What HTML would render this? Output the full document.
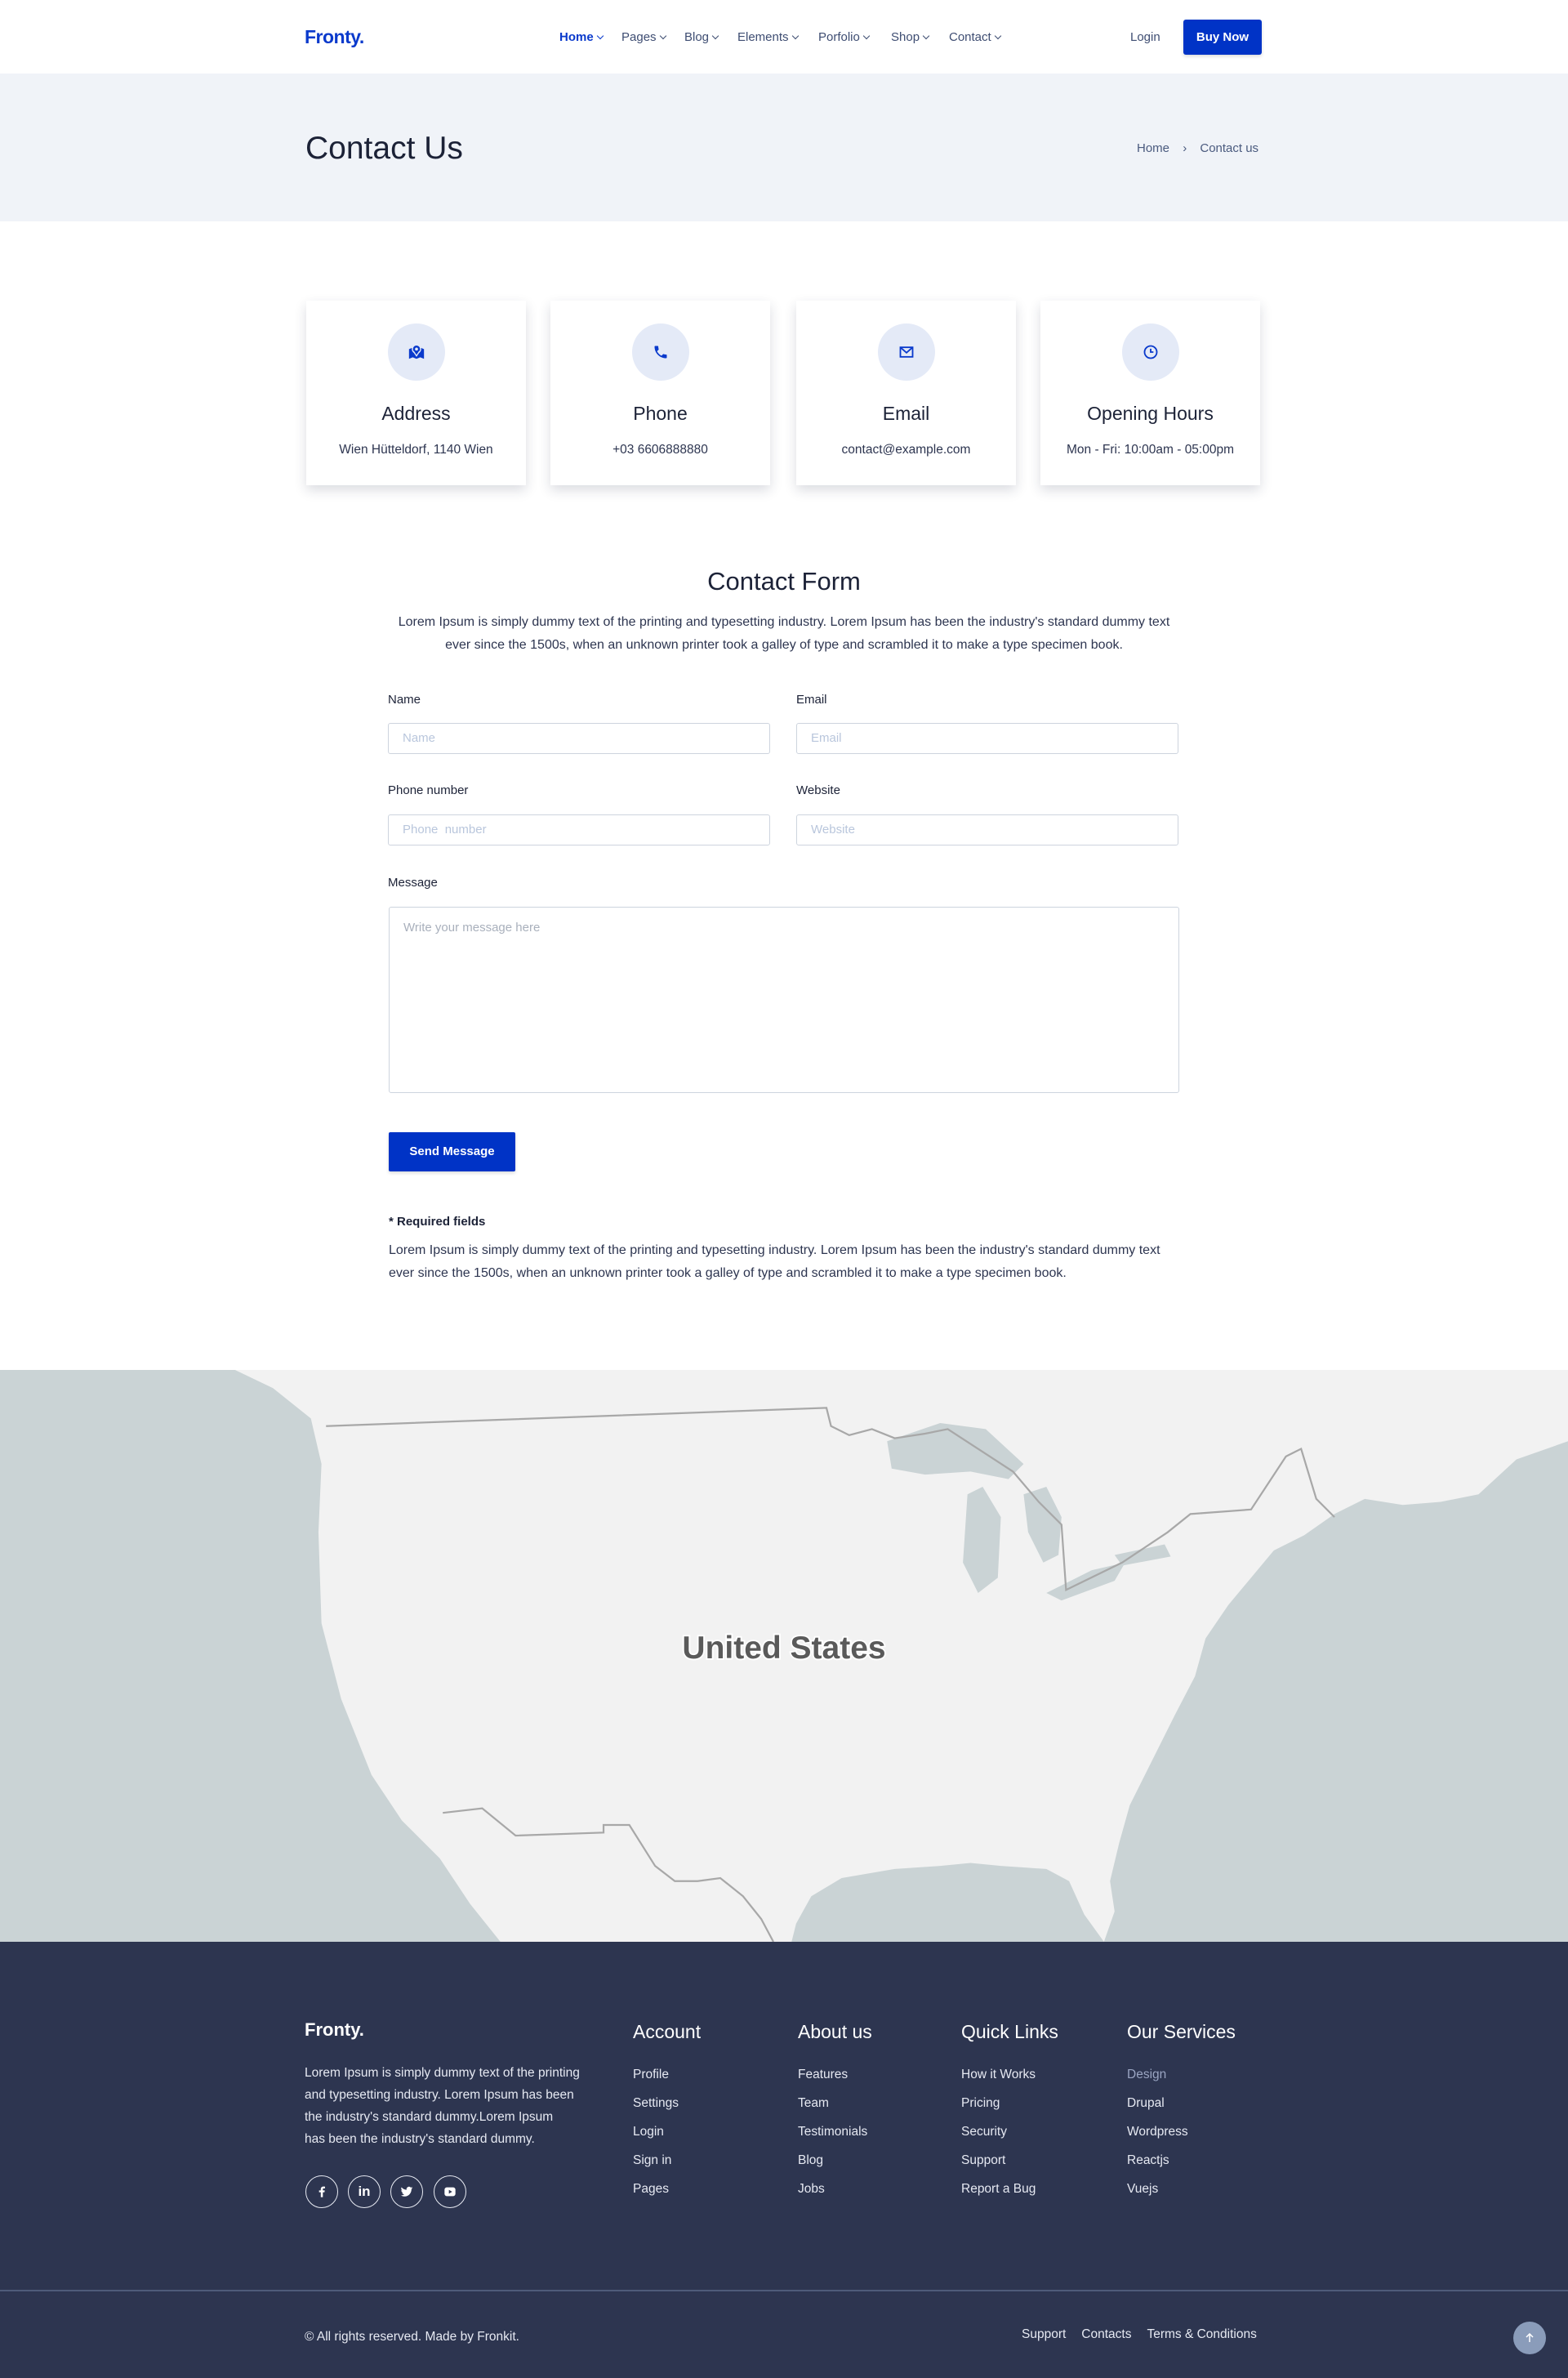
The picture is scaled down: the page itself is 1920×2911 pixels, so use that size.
<!DOCTYPE html>
<html><head><meta charset="utf-8">
<style>
*{margin:0;padding:0;box-sizing:border-box}
body{width:1920px;height:2911px;position:relative;font-family:"Liberation Sans",Arial,sans-serif;background:#fff;color:#1c2237;overflow:hidden}
.a{position:absolute;white-space:nowrap}
.nav a{position:absolute;top:37px;font-size:15px;color:#3e4d72;text-decoration:none}
.nav a .c{display:inline-block;width:6px;height:6px;border-right:1.3px solid currentColor;border-bottom:1.3px solid currentColor;transform:rotate(45deg);margin-left:5px;position:relative;top:-3px}
.card{position:absolute;top:368px;width:269px;height:226px;background:#fff;box-shadow:0 6px 14px rgba(30,40,70,.16);text-align:center}
.card .ic{width:70px;height:70px;border-radius:50%;background:#e4eaf7;margin:28px auto 0;display:flex;align-items:center;justify-content:center}
.card h3{font-size:23px;margin-top:27px;color:#1c2237;font-weight:normal}
.card p{font-size:15.5px;color:#2d3550;margin-top:22px}
.lbl{position:absolute;font-size:15px;color:#1c2237}
.inp{position:absolute;height:38px;border:1px solid #cdd4de;border-radius:3px;font-size:15px;color:#b9c6dc;padding:9px 17px}
.para{font-size:16px;line-height:28px;color:#2d3550}
.fh{position:absolute;top:2474px;font-size:23px;color:#fff}
.fl{position:absolute;font-size:15.5px;color:#e6e9f2;line-height:35px}
.soc{position:absolute;top:2663px;width:40px;height:40px;border:1.3px solid #e8ebf3;border-radius:50%;display:flex;align-items:center;justify-content:center}
</style></head><body>

<div class="a" style="left:373px;top:32px;font-size:23px;font-weight:bold;color:#0a3acc;letter-spacing:-0.5px">Fronty.</div>
<div class="nav">
<a style="left:685px;color:#0a3acc;font-weight:bold">Home<span class="c"></span></a>
<a style="left:761px">Pages<span class="c"></span></a>
<a style="left:838px">Blog<span class="c"></span></a>
<a style="left:903px">Elements<span class="c"></span></a>
<a style="left:1002px">Porfolio<span class="c"></span></a>
<a style="left:1091px">Shop<span class="c"></span></a>
<a style="left:1162px">Contact<span class="c"></span></a>
</div>
<div class="a" style="left:1384px;top:37px;font-size:15px;color:#3e4d72">Login</div>
<div class="a" style="left:1449px;top:24px;width:96px;height:43px;background:#0033c6;border-radius:3px;color:#fff;font-size:15px;font-weight:bold;text-align:center;line-height:43px;box-shadow:0 2px 4px rgba(0,0,0,.15)">Buy Now</div>

<div class="a" style="left:0;top:90px;width:1920px;height:181px;background:#f0f3f8"></div>
<div class="a" style="left:374px;top:160px;font-size:39px;color:#1c2237">Contact Us</div>
<div class="a" style="left:1392px;top:173px;font-size:15px;color:#4a5a7e">Home <span style="margin:0 12px">›</span> Contact us</div>

<div class="card" style="left:375px"><div class="ic"><svg width="22" height="22" viewBox="0 0 24 24"><path d="M2 8l5-2 5 2 5-2 5 2v13l-5-2-5 2-5-2-5 2z" fill="#0a3acc"/><circle cx="12" cy="8" r="5.5" fill="#0a3acc" stroke="#e4eaf7" stroke-width="1.5"/><path d="M8 11l4 6 4-6" fill="#0a3acc" stroke="#e4eaf7" stroke-width="1.5"/><circle cx="12" cy="8" r="2" fill="#e4eaf7"/></svg></div><h3>Address</h3><p>Wien Hütteldorf, 1140 Wien</p></div>
<div class="card" style="left:674px"><div class="ic"><svg width="20" height="20" viewBox="0 0 24 24"><path d="M6.6 10.8c1.4 2.8 3.8 5.1 6.6 6.6l2.2-2.2c.3-.3.7-.4 1-.2 1.1.4 2.3.6 3.6.6.6 0 1 .4 1 1V20c0 .6-.4 1-1 1C10.6 21 3 13.4 3 4c0-.6.4-1 1-1h3.5c.6 0 1 .4 1 1 0 1.300.2 2.500.6 3.600.1.3 0 .7-.2 1z" fill="#0a3acc"/></svg></div><h3>Phone</h3><p>+03 6606888880</p></div>
<div class="card" style="left:975px"><div class="ic"><svg width="20" height="20" viewBox="0 0 24 24" fill="none" stroke="#0a3acc" stroke-width="2.2"><rect x="3" y="5" width="18" height="14"/><path d="M3 5l9 8 9-8"/></svg></div><h3>Email</h3><p>contact@example.com</p></div>
<div class="card" style="left:1274px"><div class="ic"><svg width="20" height="20" viewBox="0 0 24 24" fill="none" stroke="#0a3acc" stroke-width="2.2"><circle cx="12" cy="12" r="9"/><path d="M12 7v5h4"/></svg></div><h3>Opening Hours</h3><p>Mon - Fri: 10:00am - 05:00pm</p></div>

<div class="a" style="left:0;width:1920px;top:694px;text-align:center;font-size:31px;color:#1c2237">Contact Form</div>
<div class="a para" style="left:0;width:1920px;top:748px;text-align:center">Lorem Ipsum is simply dummy text of the printing and typesetting industry. Lorem Ipsum has been the industry's standard dummy text<br>ever since the 1500s, when an unknown printer took a galley of type and scrambled it to make a type specimen book.</div>

<div class="lbl" style="left:475px;top:848px">Name</div>
<div class="lbl" style="left:975px;top:848px">Email</div>
<div class="inp" style="left:475px;top:885px;width:468px">Name</div>
<div class="inp" style="left:975px;top:885px;width:468px">Email</div>
<div class="lbl" style="left:475px;top:959px">Phone number</div>
<div class="lbl" style="left:975px;top:959px">Website</div>
<div class="inp" style="left:475px;top:997px;width:468px">Phone&nbsp; number</div>
<div class="inp" style="left:975px;top:997px;width:468px">Website</div>
<div class="lbl" style="left:475px;top:1072px">Message</div>
<div class="inp" style="left:476px;top:1110px;width:968px;height:228px;color:#a9b0bc;padding-top:16px">Write your message here</div>
<div class="a" style="left:476px;top:1386px;width:155px;height:48px;background:#0033c6;border-radius:2px;color:#fff;font-size:15px;font-weight:bold;text-align:center;line-height:48px;box-shadow:0 2px 4px rgba(0,0,0,.15)">Send Message</div>
<div class="a" style="left:476px;top:1487px;font-size:15px;font-weight:bold;color:#1c2237">* Required fields</div>
<div class="a para" style="left:476px;top:1517px">Lorem Ipsum is simply dummy text of the printing and typesetting industry. Lorem Ipsum has been the industry's standard dummy text<br>ever since the 1500s, when an unknown printer took a galley of type and scrambled it to make a type specimen book.</div>

<svg class="a" style="left:0;top:1677px" width="1920" height="700" viewBox="0 903 1034 377" preserveAspectRatio="none">
<rect x="0" y="903" width="1034" height="377" fill="#cad3d5"/>
<path d="M155 903 L1034 903 L1034 950 L1000 962 L975 985 L950 990 L925 992 L900 988 L880 998 L860 1012 L840 1022 L825 1040 L810 1058 L795 1080 L788 1105 L775 1130 L765 1150 L755 1170 L745 1190 L738 1215 L732 1240 L735 1260 L728 1280 L715 1262 L705 1240 L690 1232 L660 1230 L640 1228 L620 1230 L590 1232 L555 1238 L535 1250 L525 1268 L522 1280 L330 1280 L310 1255 L290 1225 L265 1200 L245 1170 L225 1120 L212 1070 L210 1010 L212 965 L205 935 L180 915 Z" fill="#f2f2f2"/>
<path d="M585 950 L620 938 L650 942 L675 965 L665 975 L640 970 L610 972 L588 968 Z" fill="#cad3d5"/>
<path d="M638 985 L648 980 L660 1000 L658 1040 L645 1050 L635 1030 Z" fill="#cad3d5"/>
<path d="M675 985 L690 980 L700 1000 L698 1025 L688 1030 L678 1010 Z" fill="#cad3d5"/>
<path d="M690 1050 L720 1035 L742 1030 L735 1042 L700 1055 Z" fill="#cad3d5"/>
<path d="M735 1025 L768 1018 L772 1026 L740 1032 Z" fill="#cad3d5"/>
<path d="M215 940 L545 928 L548 940 L560 946 L575 942 L590 948 L610 945 L625 942 L668 970 L685 990 L700 1005 L703 1048 L740 1030 L770 1010 L785 998 L825 995 L848 960 L858 955 L868 988 L880 1000" fill="none" stroke="#a8a8a8" stroke-width="1.2"/>
<path d="M292 1195 L318 1192 L340 1210 L398 1208 L398 1203 L415 1203 L432 1230 L445 1240 L460 1240 L475 1238 L490 1250 L502 1265 L510 1280" fill="none" stroke="#a8a8a8" stroke-width="1.2"/>
<text x="517" y="1093" text-anchor="middle" font-family="Liberation Sans, sans-serif" font-size="21" font-weight="bold" fill="#5a5a5a" stroke="#fff" stroke-width="2" paint-order="stroke">United States</text>
</svg>

<div class="a" style="left:0;top:2377px;width:1920px;height:534px;background:#2d3550"></div>
<div class="a" style="left:373px;top:2472px;font-size:22px;font-weight:bold;color:#fff">Fronty.</div>
<div class="a" style="left:373px;top:2524px;font-size:15.5px;line-height:27px;color:#e6e9f2">Lorem Ipsum is simply dummy text of the printing<br>and typesetting industry. Lorem Ipsum has been<br>the industry's standard dummy.Lorem Ipsum<br>has been the industry's standard dummy.</div>
<div class="soc" style="left:374px"><svg width="16" height="18" viewBox="0 0 24 24"><path d="M14 22v-9h3l.5-3.5H14V7.5c0-1 .3-1.7 1.8-1.7H18V2.6C17.6 2.5 16.4 2.4 15 2.4c-3 0-4.8 1.8-4.8 5V9.5H7V13h3.2v9z" fill="#fff"/></svg></div>
<div class="soc" style="left:426px"><span style="color:#fff;font-weight:bold;font-size:17px">in</span></div>
<div class="soc" style="left:478px"><svg width="18" height="16" viewBox="0 0 24 24"><path d="M23 5c-.8.4-1.7.6-2.6.7.9-.6 1.6-1.4 2-2.5-.9.5-1.9.9-2.9 1.1A4.5 4.5 0 0011.8 8.4 12.8 12.8 0 012.5 3.7a4.5 4.5 0 001.4 6c-.7 0-1.4-.2-2-.6 0 2.2 1.6 4 3.6 4.4-.7.2-1.4.2-2 .1.6 1.8 2.2 3.1 4.2 3.1A9 9 0 011 18.6 12.8 12.8 0 007.9 20.6c8.3 0 12.8-6.9 12.8-12.8v-.6c.9-.6 1.7-1.4 2.3-2.2z" fill="#fff"/></svg></div>
<div class="soc" style="left:531px"><svg width="18" height="16" viewBox="0 0 24 24"><rect x="2" y="4" width="20" height="16" rx="4" fill="#fff"/><path d="M10 8.5v7l6-3.5z" fill="#2d3550"/></svg></div>

<div class="fh" style="left:775px">Account</div>
<div class="fh" style="left:977px">About us</div>
<div class="fh" style="left:1177px">Quick Links</div>
<div class="fh" style="left:1380px">Our Services</div>
<div class="fl" style="left:775px;top:2522px">Profile<br>Settings<br>Login<br>Sign in<br>Pages</div>
<div class="fl" style="left:977px;top:2522px">Features<br>Team<br>Testimonials<br>Blog<br>Jobs</div>
<div class="fl" style="left:1177px;top:2522px">How it Works<br>Pricing<br>Security<br>Support<br>Report a Bug</div>
<div class="fl" style="left:1380px;top:2522px"><span style="color:#9aa5c2">Design</span><br>Drupal<br>Wordpress<br>Reactjs<br>Vuejs</div>

<div class="a" style="left:0;top:2803px;width:1920px;height:2px;background:#4f5b7a"></div>
<div class="a" style="left:373px;top:2852px;font-size:15.5px;color:#e6e9f2">© All rights reserved. Made by Fronkit.</div>
<div class="a" style="left:1251px;top:2849px;font-size:15.5px;color:#e6e9f2">Support<span style="margin-left:19px">Contacts</span><span style="margin-left:19px">Terms &amp; Conditions</span></div>
<div class="a" style="left:1853px;top:2842px;width:40px;height:40px;border-radius:50%;background:#8a9cba;display:flex;align-items:center;justify-content:center"><svg width="12" height="12" viewBox="0 0 12 12" fill="none" stroke="#fff" stroke-width="1.5"><path d="M6 11V1M2 5l4-4 4 4"/></svg></div>
</body></html>
